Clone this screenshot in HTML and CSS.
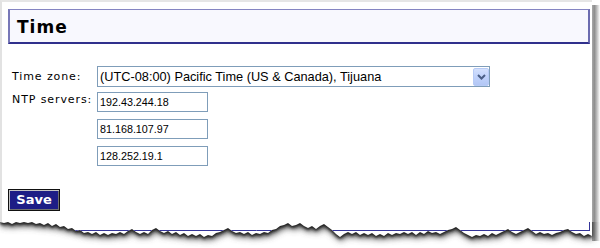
FILE: index.html
```html
<!DOCTYPE html>
<html>
<head>
<meta charset="utf-8">
<link rel="stylesheet" href="styles.css">
</head>
<body>
<div class="frame">
  <div class="sheet">
    <div class="header"><h1 class="title">Time</h1></div>
    <div class="form">
      <div class="label label-select">Time zone:</div>
      <div class="select">
        <span class="select-value">(UTC-08:00) Pacific Time (US &amp; Canada), Tijuana</span>
        <span class="select-btn">
          <svg width="9" height="6" viewBox="0 0 9 6"><path d="M1 1 L4.5 4.5 L8 1" fill="none" stroke="#4b5f86" stroke-width="2"/></svg>
        </span>
      </div>
      <div class="label label-input">NTP servers:</div>
      <div class="inputs">
        <input class="text" type="text" value="192.43.244.18">
        <input class="text" type="text" value="81.168.107.97">
        <input class="text" type="text" value="128.252.19.1">
      </div>
    </div>
    <button class="save" type="button">Save</button>
  </div>
  <svg class="torn" width="600" height="26" viewBox="0 222 600 26">
    <defs>
      <filter id="blur" x="-5%" y="-100%" width="110%" height="300%"><feGaussianBlur stdDeviation="1.4"/></filter>
      <filter id="blur2" x="-5%" y="-100%" width="110%" height="300%"><feGaussianBlur stdDeviation="3"/></filter>
      <clipPath id="clip"><polygon points="0,210 0,222 4,223 8,222 12,224 16,222 20,223 24,222 28,223 32,222 36,224 40,223 44,225 48,223 52,226 56,224 60,227 64,226 68,229 72,228 76,231 80,230 84,233 88,232 92,234 96,232 100,235 104,233 108,235 112,233 116,234 120,232 124,234 128,231 132,229 136,232 140,234 144,232 148,234 152,230 156,228 160,231 164,233 168,231 172,234 176,232 180,235 184,233 188,236 192,234 196,236 200,234 204,237 208,235 212,236 216,233 220,232 224,230 228,228 232,231 236,233 240,232 244,234 248,232 252,235 256,233 260,234 264,232 268,233 272,230 276,229 280,226 284,225 288,223 292,226 296,225 300,223 304,226 308,228 312,226 316,229 320,226 324,224 328,227 332,230 336,234 340,237 344,234 348,232 352,234 356,232 360,235 364,233 368,235 372,233 376,236 380,234 384,236 388,233 392,235 396,233 400,234 404,232 408,234 412,232 416,235 420,232 424,234 428,231 432,233 436,232 440,234 444,232 448,230 452,229 456,227 460,230 464,233 468,235 472,237 476,235 480,236 484,234 488,236 492,233 496,235 500,233 504,231 508,229 512,232 516,234 520,232 524,230 528,228 532,231 536,234 540,232 544,234 548,233 552,235 556,233 560,232 564,230 568,229 572,232 576,234 580,233 584,236 588,234 592,236 592,210"/></clipPath>
    </defs>
    <polygon transform="translate(1,4)" filter="url(#blur2)" fill="#555" points="0,210 0,222 4,223 8,222 12,224 16,222 20,223 24,222 28,223 32,222 36,224 40,223 44,225 48,223 52,226 56,224 60,227 64,226 68,229 72,228 76,231 80,230 84,233 88,232 92,234 96,232 100,235 104,233 108,235 112,233 116,234 120,232 124,234 128,231 132,229 136,232 140,234 144,232 148,234 152,230 156,228 160,231 164,233 168,231 172,234 176,232 180,235 184,233 188,236 192,234 196,236 200,234 204,237 208,235 212,236 216,233 220,232 224,230 228,228 232,231 236,233 240,232 244,234 248,232 252,235 256,233 260,234 264,232 268,233 272,230 276,229 280,226 284,225 288,223 292,226 296,225 300,223 304,226 308,228 312,226 316,229 320,226 324,224 328,227 332,230 336,234 340,237 344,234 348,232 352,234 356,232 360,235 364,233 368,235 372,233 376,236 380,234 384,236 388,233 392,235 396,233 400,234 404,232 408,234 412,232 416,235 420,232 424,234 428,231 432,233 436,232 440,234 444,232 448,230 452,229 456,227 460,230 464,233 468,235 472,237 476,235 480,236 484,234 488,236 492,233 496,235 500,233 504,231 508,229 512,232 516,234 520,232 524,230 528,228 532,231 536,234 540,232 544,234 548,233 552,235 556,233 560,232 564,230 568,229 572,232 576,234 580,233 584,236 588,234 592,236 592,210"/>
    <polygon transform="translate(0,2)" filter="url(#blur)" fill="#1a1a1a" points="0,210 0,222 4,223 8,222 12,224 16,222 20,223 24,222 28,223 32,222 36,224 40,223 44,225 48,223 52,226 56,224 60,227 64,226 68,229 72,228 76,231 80,230 84,233 88,232 92,234 96,232 100,235 104,233 108,235 112,233 116,234 120,232 124,234 128,231 132,229 136,232 140,234 144,232 148,234 152,230 156,228 160,231 164,233 168,231 172,234 176,232 180,235 184,233 188,236 192,234 196,236 200,234 204,237 208,235 212,236 216,233 220,232 224,230 228,228 232,231 236,233 240,232 244,234 248,232 252,235 256,233 260,234 264,232 268,233 272,230 276,229 280,226 284,225 288,223 292,226 296,225 300,223 304,226 308,228 312,226 316,229 320,226 324,224 328,227 332,230 336,234 340,237 344,234 348,232 352,234 356,232 360,235 364,233 368,235 372,233 376,236 380,234 384,236 388,233 392,235 396,233 400,234 404,232 408,234 412,232 416,235 420,232 424,234 428,231 432,233 436,232 440,234 444,232 448,230 452,229 456,227 460,230 464,233 468,235 472,237 476,235 480,236 484,234 488,236 492,233 496,235 500,233 504,231 508,229 512,232 516,234 520,232 524,230 528,228 532,231 536,234 540,232 544,234 548,233 552,235 556,233 560,232 564,230 568,229 572,232 576,234 580,233 584,236 588,234 592,236 592,210"/>
    <rect x="0" y="210" width="592" height="40" fill="#ffffff" clip-path="url(#clip)"/>
    <g clip-path="url(#clip)">
      <line x1="0" y1="230.5" x2="590" y2="230.5" stroke="#35359a" stroke-width="1"/>
      <line x1="589.5" y1="222" x2="589.5" y2="231" stroke="#35359a" stroke-width="1"/>
    </g>
  </svg>
</div>
</body>
</html>
```
FILE: styles.css
```css
* { box-sizing: border-box; }
html, body { margin: 0; padding: 0; background: #fff; }
.frame {
  position: relative;
  width: 600px;
  height: 248px;
  overflow: hidden;
}
.sheet {
  position: relative;
  width: 592px;
  height: 222px;
  border-top: 2px solid #e6e6e6;
  border-left: 2px solid #e2e2e2;
  background: #fff;
}
.sheet::after {
  content: "";
  position: absolute;
  left: 590px;
  top: 3px;
  width: 8px;
  height: 236px;
  background: linear-gradient(to right, #a8a8a8 0%, #8e8e8e 30%, #bcbcbc 60%, #ffffff 100%);
}
.header {
  margin: 7px 2px 0 6px;
  height: 35px;
  border-top: 1px solid #8585c2;
  border-left: 2px solid #7878b8;
  border-right: 2px solid #6c6cb0;
  border-bottom: 2px solid #30308c;
  background: #f8f8fe;
  padding: 2px 0 0 7px;
}
.title {
  margin: 0;
  font-family: "DejaVu Sans", Verdana, sans-serif;
  font-weight: bold;
  font-size: 17px;
  line-height: 30px;
  letter-spacing: 1px;
  color: #000;
}
.form {
  margin-top: 22px;
  padding-left: 10px;
  display: grid;
  grid-template-columns: 85px 393px;
  row-gap: 5px;
}
.label {
  font-family: "DejaVu Sans", Verdana, sans-serif;
  font-size: 11px;
  letter-spacing: 0.9px;
  line-height: 13px;
  color: #000;
}
.label-select { padding-top: 4px; }
.label-input { padding-top: 1px; }
.select {
  display: flex;
  align-items: center;
  height: 21px;
  border: 1px solid #7f9db9;
  background: #fff;
}
.select-value {
  flex: 1;
  padding-left: 2px;
  font-family: "Liberation Sans", Arial, sans-serif;
  font-size: 12.75px;
  color: #000;
  white-space: nowrap;
}
.select-btn {
  width: 16px;
  height: 18px;
  display: flex;
  align-items: center;
  justify-content: center;
  border: 1px solid #b7cbf6;
  border-radius: 2px;
  background: linear-gradient(to bottom, #d3e0fd 0%, #c0d2fb 50%, #b3c7f5 100%);
}
.select-btn svg { display: block; }
.inputs {
  display: flex;
  flex-direction: column;
  gap: 7px;
}
.text {
  width: 111px;
  height: 20px;
  margin: 0;
  padding: 0 0 0 2px;
  border: 1px solid #7f9db9;
  font-family: "Liberation Sans", Arial, sans-serif;
  font-size: 10.75px;
  color: #000;
  background: #fff;
  outline: none;
}
.save {
  display: block;
  margin: 23px 0 0 6px;
  width: 52px;
  height: 22px;
  padding: 0;
  border: 1px solid #111;
  box-shadow: inset 1px 1px 0 #c4c4c4, inset -1px -1px 0 #707070;
  background: #1d1d86;
  color: #fff;
  font-family: "DejaVu Sans", Verdana, sans-serif;
  font-weight: bold;
  font-size: 13px;
  line-height: 20px;
  cursor: pointer;
}
.torn {
  position: absolute;
  left: 0;
  top: 222px;
  display: block;
}
```
